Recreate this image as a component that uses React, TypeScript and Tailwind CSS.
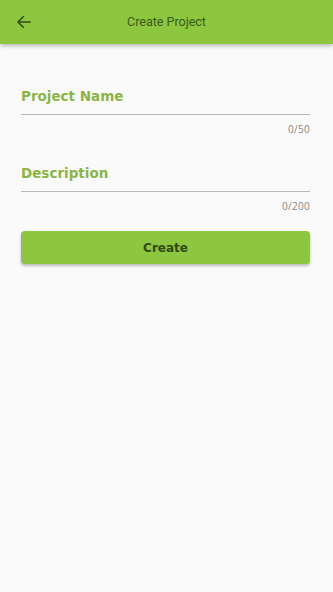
import React, { useState } from "react";

const labelFont = { fontFamily: '"DejaVu Sans", "Open Sans", sans-serif' };

function Field({ label, max }: { label: string; max: number }) {
  const [value, setValue] = useState("");
  return (
    <div className="flex flex-col">
      <div className="border-b border-[#b8b8b8] pb-[7px]">
        <input
          value={value}
          onChange={(e) => setValue(e.target.value.slice(0, max))}
          placeholder={label}
          className="w-full bg-transparent text-[13.5px] font-bold text-[#8ab545] placeholder:text-[#8ab545] outline-none leading-[18px]"
          style={labelFont}
        />
      </div>
      <div
        className="mt-[8px] text-right text-[10px] leading-[12px] text-[#858585] tracking-[0.3px]"
        style={{ fontFamily: '"Open Sans", "DejaVu Sans", sans-serif' }}
      >
        {value.length}/{max}
      </div>
    </div>
  );
}

export default function App() {
  return (
    <div className="min-h-[592px] w-full bg-[#fafafa]">
      <header className="relative flex h-[44px] items-center bg-[#8dc63f] shadow-[0_2px_4px_rgba(0,0,0,0.25)]">
        <button className="absolute left-[14px] flex h-[20px] w-[20px] items-center justify-center">
          <svg width="18" height="18" viewBox="0 0 24 24" fill="none" stroke="#2e4a14" strokeWidth="2" strokeLinecap="square">
            <path d="M20 12H5" />
            <path d="M11 5l-7 7 7 7" />
          </svg>
        </button>
        <h1
          className="w-full text-center text-[12.5px] text-[#3b5a1c]"
          style={{ fontFamily: 'Roboto, "Liberation Sans", sans-serif' }}
        >
          Create Project
        </h1>
      </header>
      <main className="flex flex-col px-[21px] pt-[39px] pr-[23px]">
        <Field label="Project Name" max={50} />
        <div className="h-[25px]" />
        <Field label="Description" max={200} />
        <button
          className="mt-[19px] flex h-[33px] items-center justify-center rounded-[4px] bg-[#8dc63f] text-[12px] font-bold text-[#2d4a12] shadow-[0_2px_3px_rgba(0,0,0,0.25)]"
          style={labelFont}
        >
          Create
        </button>
      </main>
    </div>
  );
}
